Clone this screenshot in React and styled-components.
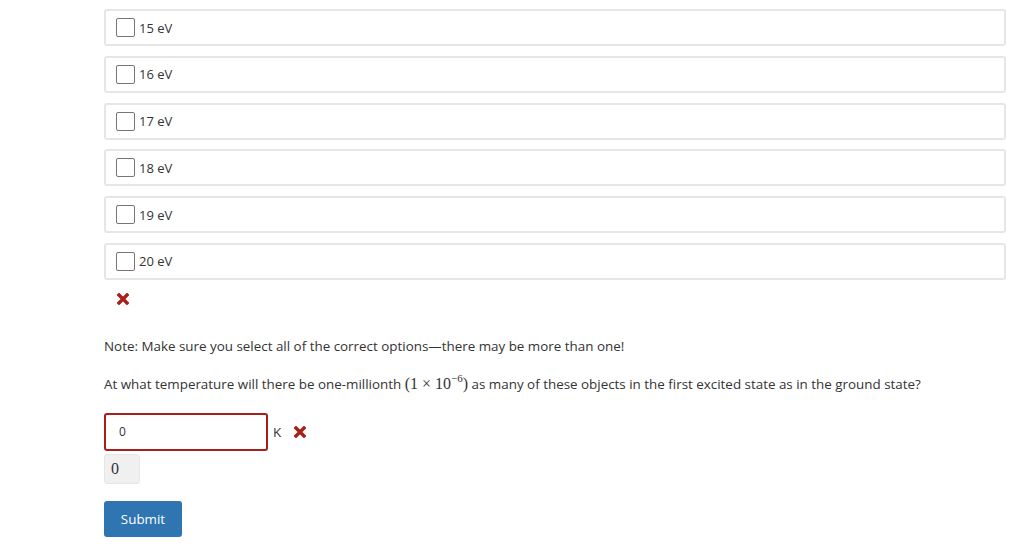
import React from 'react';
import styled, { createGlobalStyle } from 'styled-components';

const options = ['15 eV', '16 eV', '17 eV', '18 eV', '19 eV', '20 eV'];

function Cross() {
  return (
    <CrossIcon viewBox="0 0 12 12" aria-hidden="true">
      <path d="M2 2 L10 10 M10 2 L2 10" stroke="#a8201a" strokeWidth="3.4" strokeLinecap="square" />
    </CrossIcon>
  );
}

function App() {
  return (
    <Page>
      <GlobalStyle />
      <OptionList>
        {options.map((o) => (
          <OptionBox key={o}>
            <Check type="checkbox" />
            <OptionLabel>{o}</OptionLabel>
          </OptionBox>
        ))}
      </OptionList>
      <MarkRow>
        <Cross />
      </MarkRow>
      <Note>Note: Make sure you select all of the correct options—there may be more than one!</Note>
      <Question>
        At what temperature will there be one-millionth <Math>(1 × 10<sup>−6</sup>)</Math> as many
        of these objects in the first excited state as in the ground state?
      </Question>
      <AnswerRow>
        <AnswerInput defaultValue="0" />
        <Unit>K</Unit>
        <Cross />
      </AnswerRow>
      <Preview>0</Preview>
      <SubmitButton>Submit</SubmitButton>
    </Page>
  );
}

const GlobalStyle = createGlobalStyle`
  body {
    margin: 0;
    background: #fff;
    font-family: 'Open Sans', 'Liberation Sans', sans-serif;
    font-size: 13.4px;
    color: #333;
  }
`;

const Page = styled.div`
  padding: 9px 18px 0 104px;
`;

const OptionList = styled.div`
  display: flex;
  flex-direction: column;
  gap: 9.8px;
`;

const OptionBox = styled.label`
  display: flex;
  align-items: center;
  height: 37px;
  box-sizing: border-box;
  padding-left: 10px;
  border: 2px solid #e6e6e6;
  border-radius: 3px;
`;

const Check = styled.input`
  appearance: none;
  width: 19px;
  height: 19px;
  margin: 0 4px 0 0;
  border: 1px solid #767676;
  border-radius: 2px;
  background: #fff;
`;

const OptionLabel = styled.span`
  font-size: 13px;
`;

const CrossIcon = styled.svg`
  width: 12px;
  height: 12px;
  display: block;
  flex-shrink: 0;
`;

const MarkRow = styled.div`
  padding: 13px 0 0 13px;
`;

const Note = styled.p`
  margin: 32px 0 0;
  line-height: 18px;
`;

const Question = styled.p`
  margin: 20px 0 0;
  line-height: 18px;
`;

const Math = styled.span`
  font-family: 'Liberation Serif', 'DejaVu Serif', serif;
  font-size: 16px;

  sup {
    font-size: 11px;
    vertical-align: 7px;
    line-height: 0;
  }
`;

const AnswerRow = styled.div`
  display: flex;
  align-items: center;
  margin-top: 20px;
`;

const AnswerInput = styled.input`
  width: 164px;
  height: 38px;
  box-sizing: border-box;
  padding: 0 13px;
  border: 2px solid #a8201a;
  border-radius: 3px;
  font-family: 'Open Sans', 'Liberation Sans', sans-serif;
  font-size: 12px;
  color: #333;
  outline: none;
`;

const Unit = styled.span`
  margin: 0 13px 0 5px;
`;

const Preview = styled.div`
  width: 36px;
  height: 30px;
  box-sizing: border-box;
  margin-top: 3px;
  padding-left: 6px;
  display: flex;
  align-items: center;
  background: #f0f0f0;
  border: 1px solid #e6e6e6;
  border-radius: 3px;
  font-family: 'Liberation Serif', 'DejaVu Serif', serif;
  font-size: 16px;
`;

const SubmitButton = styled.button`
  display: block;
  margin-top: 17px;
  width: 78px;
  height: 36px;
  border: none;
  border-radius: 3px;
  background: #2e75b2;
  color: #fff;
  font-family: 'Open Sans', 'Liberation Sans', sans-serif;
  font-size: 13.4px;
`;

export default App;
